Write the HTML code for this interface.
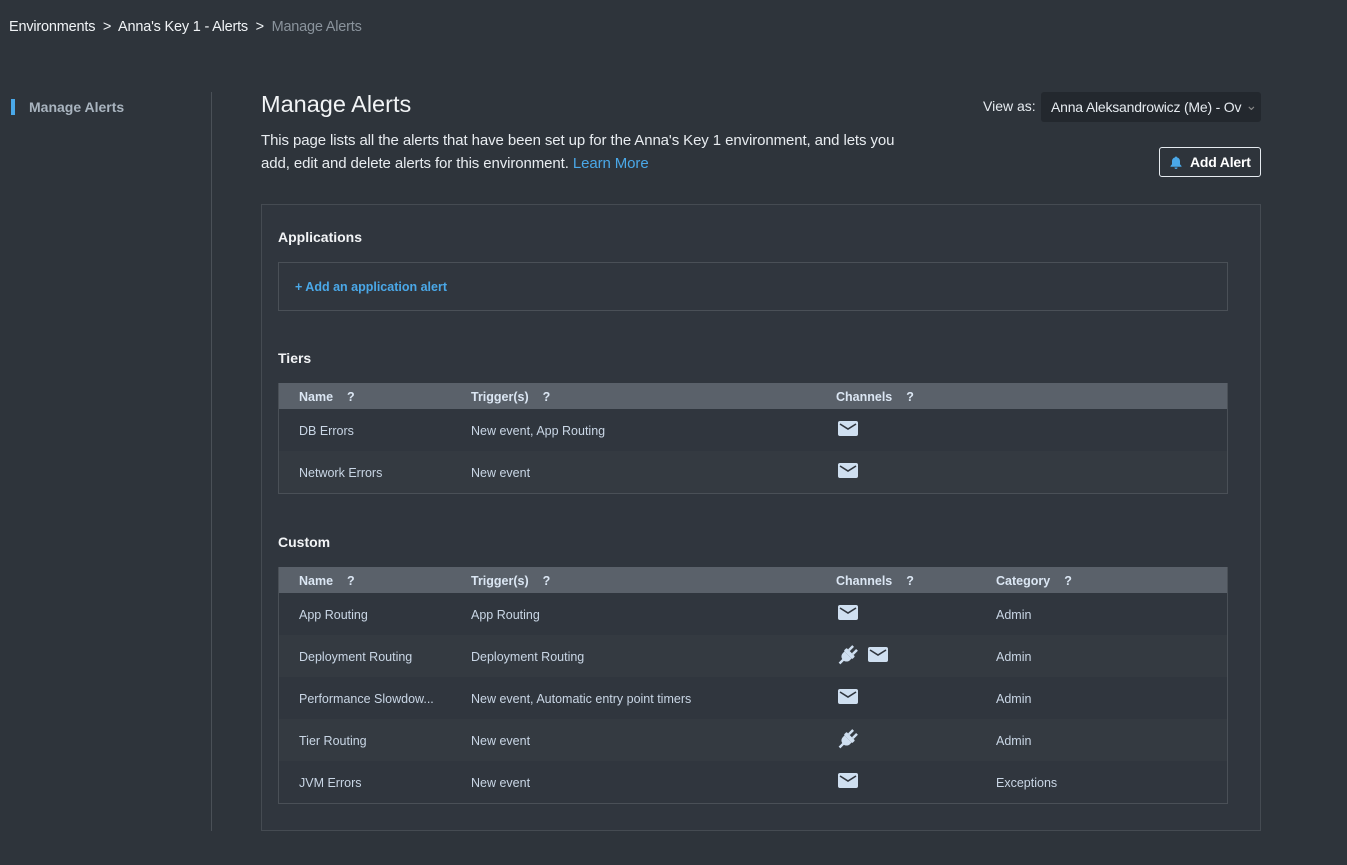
<!DOCTYPE html>
<html><head><meta charset="utf-8"><style>
*{margin:0;padding:0;box-sizing:border-box}
body{width:1347px;height:865px;background:#2e343b;font-family:"Liberation Sans",sans-serif;color:#e6ebf0;position:relative;overflow:hidden}
.abs{position:absolute}
.bc{left:9px;top:19px;font-size:14.5px;color:#f0f3f6;white-space:nowrap;letter-spacing:-0.2px}
.bc .g{color:#8a939c}
.side{left:211px;top:92px;width:1px;height:739px;background:#4a5057}
.bar{left:11px;top:99px;width:4px;height:16px;background:#4aa8e8}
.sl{left:29px;top:99px;font-size:14px;font-weight:bold;color:#a9b4bf}
h1{position:absolute;left:261px;top:91px;font-size:23.5px;font-weight:normal;color:#f2f4f6}
.desc{left:261px;top:129px;font-size:15px;line-height:23px;color:#e8ecf0;width:650px;letter-spacing:-0.1px}
.desc a{color:#4aa8e8;text-decoration:none}
.va{left:983px;top:98px;font-size:14px;color:#e6ebf0}
.sel{left:1041px;top:92px;width:220px;height:30px;background:#23282e;border-radius:3px;font-size:14px;padding:7px 10px;color:#e6ebf0;white-space:nowrap;overflow:hidden;letter-spacing:-0.2px}
.btn{left:1159px;top:147px;width:102px;height:30px;border:1px solid #e6ebf0;border-radius:3px;font-size:14px;font-weight:bold;padding:6px 0 0 30px;color:#fff;letter-spacing:-0.2px}
.panel{left:261px;top:204px;width:1000px;height:627px;border:1px solid #454b52;background:#30363e}
.lbl{font-size:14px;font-weight:bold;color:#f2f4f6}
.box{left:278px;top:262px;width:950px;height:49px;border:1px solid #4a5057}
.box span{position:absolute;left:16px;top:17px;font-size:12.5px;font-weight:bold;color:#4aa8e8}
.tbl{left:278px;width:950px;border:1px solid #4a5057;border-top:none}
.hd{height:26px;background:#5a616a;position:relative;font-size:12.5px;font-weight:bold;color:#dbe6f3}
.row{height:42px;position:relative;font-size:12.5px;color:#c9d6e5}
.row:nth-child(even){background:#30363e}
.row:nth-child(odd){background:#343a41}
.c{position:absolute;top:15px;white-space:nowrap}
.hd .c{top:7px}
.c1{left:20px}.c2{left:192px}.c3{left:557px}.c4{left:717px}
.q{margin-left:14px}
.ic{position:absolute;top:11px}
</style></head><body>
<div class="abs bc">Environments &nbsp;&gt;&nbsp; Anna's Key 1 - Alerts &nbsp;&gt;&nbsp; <span class="g">Manage Alerts</span></div>
<div class="abs side"></div>
<div class="abs bar"></div>
<div class="abs sl">Manage Alerts</div>
<h1>Manage Alerts</h1>
<div class="abs desc">This page lists all the alerts that have been set up for the Anna's Key 1 environment, and lets you add, edit and delete alerts for this environment. <a>Learn More</a></div>
<div class="abs va">View as:</div>
<div class="abs sel">Anna Aleksandrowicz (Me) - Ov<span style="position:absolute;right:4px;top:5px;color:#888">⌄</span></div>
<div class="abs btn"><svg class="abs" style="left:10px;top:8px" width="12" height="13" viewBox="0 0 12 13"><path d="M6 0.5c.6 0 1 .4 1 .9 1.8.4 3 2 3 3.9v3l1.5 1.7v.8H.5v-.8L2 8.3v-3c0-1.9 1.2-3.5 3-3.9 0-.5.4-.9 1-.9zM4.5 11.5h3a1.5 1.5 0 0 1-3 0z" fill="#4aa8e8"/></svg>Add Alert</div>
<div class="abs panel"></div>
<div class="abs lbl" style="left:278px;top:229px">Applications</div>
<div class="abs box"><span>+ Add an application alert</span></div>
<div class="abs lbl" style="left:278px;top:350px">Tiers</div>
<div class="abs tbl" style="top:383px">
<div class="hd"><span class="c c1">Name<span class="q">?</span></span><span class="c c2">Trigger(s)<span class="q">?</span></span><span class="c c3">Channels<span class="q">?</span></span></div>
<div class="row"><span class="c c1">DB Errors</span><span class="c c2">New event, App Routing</span><svg class="ic" style="left:558px" width="22" height="17"><use href="#m"/></svg></div>
<div class="row"><span class="c c1">Network Errors</span><span class="c c2">New event</span><svg class="ic" style="left:558px" width="22" height="17"><use href="#m"/></svg></div>
</div>
<div class="abs lbl" style="left:278px;top:534px">Custom</div>
<div class="abs tbl" style="top:567px">
<div class="hd"><span class="c c1">Name<span class="q">?</span></span><span class="c c2">Trigger(s)<span class="q">?</span></span><span class="c c3">Channels<span class="q">?</span></span><span class="c c4">Category<span class="q">?</span></span></div>
<div class="row"><span class="c c1">App Routing</span><span class="c c2">App Routing</span><svg class="ic" style="left:558px" width="22" height="17"><use href="#m"/></svg><span class="c c4">Admin</span></div>
<div class="row"><span class="c c1">Deployment Routing</span><span class="c c2">Deployment Routing</span><svg class="ic" style="left:558px;top:9px" width="22" height="22"><use href="#p"/></svg><svg class="ic" style="left:588px" width="22" height="17"><use href="#m"/></svg><span class="c c4">Admin</span></div>
<div class="row"><span class="c c1">Performance Slowdow...</span><span class="c c2">New event, Automatic entry point timers</span><svg class="ic" style="left:558px" width="22" height="17"><use href="#m"/></svg><span class="c c4">Admin</span></div>
<div class="row"><span class="c c1">Tier Routing</span><span class="c c2">New event</span><svg class="ic" style="left:558px;top:9px" width="22" height="22"><use href="#p"/></svg><span class="c c4">Admin</span></div>
<div class="row"><span class="c c1">JVM Errors</span><span class="c c2">New event</span><svg class="ic" style="left:558px" width="22" height="17"><use href="#m"/></svg><span class="c c4">Exceptions</span></div>
</div>
<svg width="0" height="0" style="position:absolute"><defs>
<g id="m"><rect x="1" y="1" width="20" height="15" rx="2" fill="#cfdff0"/><path d="M3 4l8 5 8-5" stroke="#30363e" stroke-width="1.6" fill="none"/></g>
<g id="p" fill="#cfdff0"><g transform="rotate(45 11 11)"><rect x="5" y="7" width="12" height="4" rx="1"/><path d="M6 11h10v2c0 3-2 5-5 5s-5-2-5-5z"/><rect x="7" y="1" width="2.5" height="6"/><rect x="12.5" y="1" width="2.5" height="6"/><rect x="9.8" y="17" width="2.4" height="6"/></g></g>
</defs></svg>
</body></html>
